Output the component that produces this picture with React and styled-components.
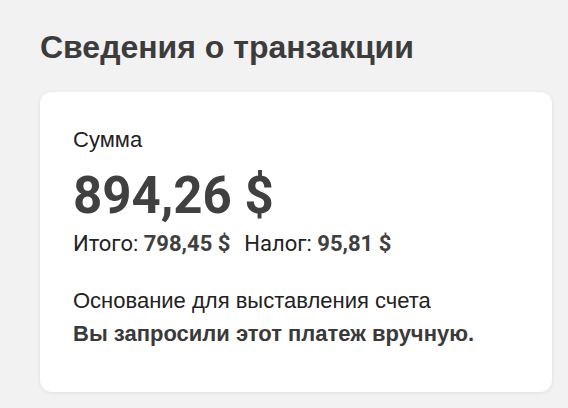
import React from 'react';
import styled, { createGlobalStyle } from 'styled-components';

const GlobalStyle = createGlobalStyle`
    html, body {
        margin: 0;
        padding: 0;
        background-color: #f2f2f2;
    }
`;

function App() {
    return (
        <>
            <GlobalStyle />
            <Page>
                <Title>Сведения о транзакции</Title>
                <Card>
                    <Label>Сумма</Label>
                    <Amount>894,26 $</Amount>
                    <Breakdown>
                        <span>Итого: <strong>798,45 $</strong></span>
                        <span>Налог: <strong>95,81 $</strong></span>
                    </Breakdown>
                    <Reason>Основание для выставления счета</Reason>
                    <ReasonValue>Вы запросили этот платеж вручную.</ReasonValue>
                </Card>
            </Page>
        </>
    );
}

const Page = styled.div`
    padding: 29px 16px 16px 40px;
    font-family: "Liberation Sans", Arial, sans-serif;
`;

const Title = styled.h1`
    margin: 0 0 27px;
    font-size: 32px;
    line-height: 36px;
    font-weight: 700;
    color: #3c3c3c;
`;

const Card = styled.div`
    width: 512px;
    height: 300px;
    box-sizing: border-box;
    padding: 35px 33px;
    background-color: #ffffff;
    border-radius: 12px;
    box-shadow: 0 1px 4px rgba(0, 0, 0, 0.08);
    display: flex;
    flex-direction: column;
`;

const Label = styled.div`
    font-size: 22px;
    line-height: 26px;
    color: #222222;
`;

const Amount = styled.div`
    margin-top: 13px;
    font-family: Roboto, sans-serif;
    font-size: 51px;
    line-height: 60px;
    font-weight: 700;
    color: #404040;
`;

const Breakdown = styled.div`
    margin-top: 5px;
    display: flex;
    gap: 14px;
    font-family: Roboto, sans-serif;
    font-size: 22px;
    line-height: 26px;
    color: #222222;

    strong {
        color: #404040;
        font-weight: 700;
    }
`;

const Reason = styled.div`
    margin-top: 31px;
    font-size: 22px;
    line-height: 26px;
    color: #222222;
`;

const ReasonValue = styled.div`
    margin-top: 7px;
    font-size: 22px;
    line-height: 26px;
    font-weight: 700;
    color: #3a3a3a;
`;

export default App;
